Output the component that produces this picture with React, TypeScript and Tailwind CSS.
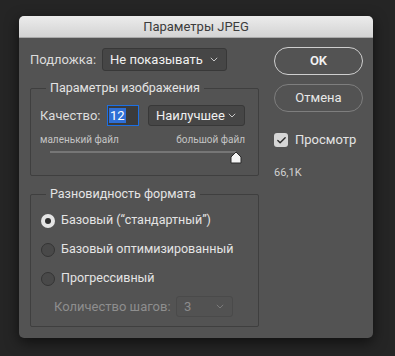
import { Check } from 'lucide-react';

const font = { fontFamily: 'Roboto, "Noto Sans", sans-serif' };

const Chevron = ({ color = '#c8c8c8' }: { color?: string }) => (
  <svg width="8" height="5" viewBox="0 0 8 5" fill="none">
    <path d="M0.8 0.8 L4 4 L7.2 0.8" stroke={color} strokeWidth="1" />
  </svg>
);

const Select = ({
  value,
  className,
  disabled,
}: {
  value: string;
  className: string;
  disabled?: boolean;
}) => (
  <div
    className={`flex items-center justify-between rounded-[3px] border pl-[7px] pr-[8px] text-[13px] ${
      disabled
        ? 'border-[#4a4a4a] bg-[#525252] text-[#8c8c8c]'
        : 'border-[#383838] bg-[#464646] text-[#f0f0f0]'
    } ${className}`}
  >
    <span>{value}</span>
    <Chevron color={disabled ? '#7a7a7a' : '#c8c8c8'} />
  </div>
);

const Radio = ({ label, checked }: { label: string; checked?: boolean }) => (
  <div className="flex h-[29px] items-center">
    {checked ? (
      <div className="flex h-[14px] w-[14px] items-center justify-center rounded-full bg-[#e4e4e4]">
        <div className="h-[6px] w-[6px] rounded-full bg-[#2e2e2e]" />
      </div>
    ) : (
      <div className="h-[14px] w-[14px] rounded-full border-[1.5px] border-[#343434] bg-[#494949]" />
    )}
    <span className="ml-[6px] text-[12.5px] text-[#e4e4e4]">{label}</span>
  </div>
);

export default function App() {
  return (
    <div className="h-[356px] w-[395px] bg-[#252525] pl-[19px] pt-[16px]" style={font}>
      <div className="h-[322px] w-[354px] overflow-hidden rounded-[5px] bg-[#535353] shadow-[0_4px_14px_rgba(0,0,0,0.6)]">
        <div className="flex h-[22px] items-center justify-center border-b border-[#a9a9a9] bg-gradient-to-b from-[#ececec] to-[#d3d3d3] text-[13px] text-[#3c3c3c]">
          Параметры JPEG
        </div>
        <div className="flex pl-[11px] pt-[10px]">
          <div className="w-[229px]">
            <div className="flex h-[23px] items-center">
              <span className="w-[72px] text-[13px] text-[#dcdcdc]">Подложка:</span>
              <Select value="Не показывать" className="h-[23px] w-[125px]" />
            </div>

            <fieldset className="mt-[9px] h-[96px] rounded-[2px] border border-[#3f3f3f] pl-[9px]">
              <legend className="ml-[6px] px-[4px] text-[12.5px] leading-[16px] text-[#e4e4e4]">
                Параметры изображения
              </legend>
              <div className="mt-[9px] flex h-[21px] items-center">
                <span className="w-[67px] text-[13px] text-[#dcdcdc]">Качество:</span>
                <div className="flex h-[21px] w-[32px] items-center border-[1.5px] border-[#1c6fe3] bg-[#3b3b3b] pl-[1px]">
                  <span className="bg-[#2f6fd6] px-[1px] text-[13px] leading-[15px] text-white">12</span>
                </div>
                <Select value="Наилучшее" className="ml-[9px] h-[21px] w-[97px]" />
              </div>
              <div className="mt-[8px] flex w-[205px] justify-between text-[10px] leading-[12px] text-[#c4c4c4]">
                <span>маленький файл</span>
                <span>большой файл</span>
              </div>
              <div className="relative ml-[10px] mt-[5px] h-[2px] w-[186px] bg-[#767676]">
                <svg
                  className="absolute left-[180px] top-[0px]"
                  width="12"
                  height="13"
                  viewBox="0 0 12 13"
                >
                  <path
                    d="M6 1 L11 6 L11 12 L1 12 L1 6 Z"
                    fill="#f4f4f4"
                    stroke="#2a2a2a"
                    strokeWidth="1"
                    strokeLinejoin="round"
                  />
                </svg>
              </div>
            </fieldset>

            <fieldset className="mt-[10px] h-[141px] rounded-[2px] border border-[#3f3f3f] pl-[10px]">
              <legend className="ml-[5px] px-[4px] text-[12.5px] leading-[16px] text-[#e4e4e4]">
                Разновидность формата
              </legend>
              <div className="mt-[4px]">
                <Radio label="Базовый (“стандартный”)" checked />
                <Radio label="Базовый оптимизированный" />
                <Radio label="Прогрессивный" />
              </div>
              <div className="mt-[3px] flex h-[21px] items-center pl-[13px]">
                <span className="w-[122px] text-[13px] text-[#8e8e8e]">Количество шагов:</span>
                <Select value="3" className="h-[21px] w-[57px]" disabled />
              </div>
            </fieldset>
          </div>

          <div className="ml-[15px] w-[89px]">
            <button className="-mt-[1px] flex h-[28px] w-[89px] items-center justify-center rounded-full border-[1.5px] border-[#cfcfcf] text-[13px] font-semibold text-[#f2f2f2]">
              OK
            </button>
            <button className="mt-[9px] flex h-[28px] w-[89px] items-center justify-center rounded-full border border-[#7e7e7e] text-[13px] text-[#e8e8e8]">
              Отмена
            </button>
            <div className="mt-[21px] flex h-[14px] items-center">
              <div className="flex h-[14px] w-[14px] items-center justify-center rounded-[3px] bg-[#d6d6d6]">
                <Check size={11} strokeWidth={3} color="#2c2c2c" />
              </div>
              <span className="ml-[7px] text-[13px] text-[#e4e4e4]">Просмотр</span>
            </div>
            <div className="mt-[18px] text-[11px] text-[#d0d0d0]">66,1K</div>
          </div>
        </div>
      </div>
    </div>
  );
}
